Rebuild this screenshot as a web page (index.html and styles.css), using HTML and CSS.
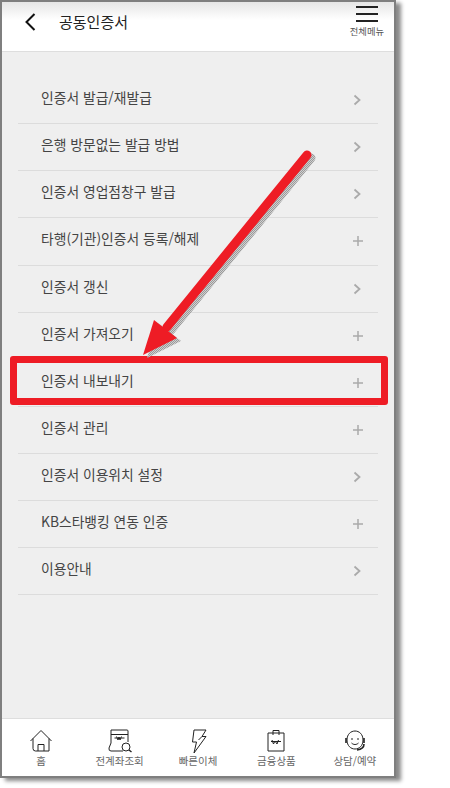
FILE: index.html
```html
<!DOCTYPE html>
<html lang="ko">
<head>
<meta charset="utf-8">
<title>공동인증서</title>
<link rel="stylesheet" href="styles.css">
</head>
<body>
<div class="phone">
  <header class="top">
    <svg class="back" width="14" height="20" viewBox="0 0 14 20"><path d="M10.500 2 2.500 10l8 8" fill="none" stroke="#111" stroke-width="2"/></svg>
    <h1 class="title">공동인증서</h1>
    <div class="menu">
      <svg width="22" height="16" viewBox="0 0 22 16"><path d="M0 1h22M0 8h22M0 15h22" stroke="#222" stroke-width="1.800"/></svg>
      <span>전체메뉴</span>
    </div>
  </header>
  <main class="content">
    <ul class="list">
      <li class="row"><span>인증서 발급/재발급</span><svg class="ic" width="10" height="14" viewBox="0 0 10 14"><path d="M1.500 2.500 6.500 7l-5 4.500" fill="none" stroke="#aaa" stroke-width="1.800"/></svg></li>
      <li class="row"><span>은행 방문없는 발급 방법</span><svg class="ic" width="10" height="14" viewBox="0 0 10 14"><path d="M1.500 2.500 6.500 7l-5 4.500" fill="none" stroke="#aaa" stroke-width="1.800"/></svg></li>
      <li class="row"><span>인증서 영업점창구 발급</span><svg class="ic" width="10" height="14" viewBox="0 0 10 14"><path d="M1.500 2.500 6.500 7l-5 4.500" fill="none" stroke="#aaa" stroke-width="1.800"/></svg></li>
      <li class="row"><span>타행(기관)인증서 등록/해제</span><svg class="ic" width="10" height="14" viewBox="0 0 10 14"><path d="M5 2v10M0 7h10" fill="none" stroke="#aaa" stroke-width="1.500"/></svg></li>
      <li class="row"><span>인증서 갱신</span><svg class="ic" width="10" height="14" viewBox="0 0 10 14"><path d="M1.500 2.500 6.500 7l-5 4.500" fill="none" stroke="#aaa" stroke-width="1.800"/></svg></li>
      <li class="row"><span>인증서 가져오기</span><svg class="ic" width="10" height="14" viewBox="0 0 10 14"><path d="M5 2v10M0 7h10" fill="none" stroke="#aaa" stroke-width="1.500"/></svg></li>
      <li class="row"><span>인증서 내보내기</span><svg class="ic" width="10" height="14" viewBox="0 0 10 14"><path d="M5 2v10M0 7h10" fill="none" stroke="#aaa" stroke-width="1.500"/></svg></li>
      <li class="row"><span>인증서 관리</span><svg class="ic" width="10" height="14" viewBox="0 0 10 14"><path d="M5 2v10M0 7h10" fill="none" stroke="#aaa" stroke-width="1.500"/></svg></li>
      <li class="row"><span>인증서 이용위치 설정</span><svg class="ic" width="10" height="14" viewBox="0 0 10 14"><path d="M1.500 2.500 6.500 7l-5 4.500" fill="none" stroke="#aaa" stroke-width="1.800"/></svg></li>
      <li class="row"><span>KB스타뱅킹 연동 인증</span><svg class="ic" width="10" height="14" viewBox="0 0 10 14"><path d="M5 2v10M0 7h10" fill="none" stroke="#aaa" stroke-width="1.500"/></svg></li>
      <li class="row"><span>이용안내</span><svg class="ic" width="10" height="14" viewBox="0 0 10 14"><path d="M1.500 2.500 6.500 7l-5 4.500" fill="none" stroke="#aaa" stroke-width="1.800"/></svg></li>
    </ul>
  </main>
  <nav class="tabs">
    <div class="tab">
      <svg width="26" height="26" viewBox="0 0 26 26" fill="none" stroke="#222" stroke-width="1"><path d="M2.500 13 13 2.500 23.500 13M5 10.500v10q0 2.500 2.500 2.500H21V10.500M10 23v-6.500h6V23"/></svg>
      <span>홈</span>
    </div>
    <div class="tab">
      <svg width="28" height="26" viewBox="0 0 28 26" fill="none" stroke="#222" stroke-width="1"><path d="M5 2h16q1 0 1 1v11M5 2v13l-2 5q-.500 3 2 3h12M5 6.500h17M10.500 8.500l1.500 3.500 1-3 1 3 1.500-3.500M8.500 10h10" /><circle cx="20" cy="19" r="4"/><path d="m23 22 2.500 2" stroke-width="1.500"/></svg>
      <span>전계좌조회</span>
    </div>
    <div class="tab">
      <svg width="26" height="26" viewBox="0 0 26 26" fill="none" stroke="#222" stroke-width="1"><path d="M9 2h12l-4 6.500h4L9 25l2.500-11H7.500zM17 8.500l-3.500 3.500"/></svg>
      <span>빠른이체</span>
    </div>
    <div class="tab">
      <svg width="26" height="26" viewBox="0 0 26 26" fill="none" stroke="#222" stroke-width="1"><path d="M5 5h16v18H5zM10 7V2.500h6V7"/><path d="M9 12l1.500 4 1.500-3 2 3 1.500-4M8 13.500h10"/></svg>
      <span>금융상품</span>
    </div>
    <div class="tab">
      <svg width="28" height="26" viewBox="0 0 28 26" fill="none" stroke="#222" stroke-width="1"><path d="M6 12c0-12 16-12 16 0 0 6-4 9-8 9s-8-3-8-9z"/><path d="M10 11h2M16 11h2M10.500 15c2 2 5 2 7 0"/><path d="M5 10v5M23 10v5M23 16q0 5-7 6" stroke-width="1.600"/></svg>
      <span>상담/예약</span>
    </div>
  </nav>
  <div class="highlight"></div>
  <svg class="arrow" width="190" height="215" viewBox="0 0 190 215">
    <defs>
      <pattern id="dither" width="2" height="2" patternUnits="userSpaceOnUse">
        <rect width="2" height="2" fill="#cfcfcf"/>
        <rect width="1" height="1" fill="#9a9a9a"/>
        <rect x="1" y="1" width="1" height="1" fill="#9a9a9a"/>
      </pattern>
    </defs>
    <g transform="translate(4 3)">
      <path d="M168 5 28 177" fill="none" stroke="url(#dither)" stroke-width="9" stroke-linecap="round"/>
      <path d="M4 205 15 170 38 188z" fill="url(#dither)"/>
    </g>
    <path d="M168 5 28 177" fill="none" stroke="#ee1c25" stroke-width="9" stroke-linecap="round"/>
    <path d="M4 205 15 170 38 188z" fill="#ee1c25"/>
  </svg>
</div>
</body>
</html>
```
FILE: styles.css
```css
* { box-sizing: border-box; }
html, body { margin: 0; padding: 0; background: #fff; }
body { width: 450px; height: 788px; overflow: hidden; font-family: "Noto Sans CJK KR", "Noto Sans", sans-serif; }
.phone {
  position: relative;
  width: 396px;
  height: 778px;
  border: 2px solid #7f7f7f;
  background: #efefef;
  display: flex;
  flex-direction: column;
  box-shadow: 5px 3px 4px #8a8a8a;
}
.top {
  height: 50px;
  flex: none;
  display: flex;
  align-items: flex-start;
  background: linear-gradient(#e6e6e6, #fff 18px);
  border-bottom: 1px solid #dedede;
  padding: 0 10px 0 22px;
}
.back { margin: 10px 21px 0 0; }
.title { margin: 8px 0 0; font-size: 15px; line-height: 24px; font-weight: 400; color: #222; flex: 1; }
.menu { display: flex; flex-direction: column; align-items: center; gap: 3px; padding-top: 4px; }
.menu span { font-size: 9.300px; color: #555; line-height: 13px; }
.content { flex: 1; padding: 25px 16px 0; }
.list { list-style: none; margin: 0; padding: 0; }
.row {
  height: 47.130px;
  display: flex;
  align-items: center;
  justify-content: space-between;
  padding: 0 15px 0 23px;
  border-bottom: 1px solid #dcdcdc;
  font-size: 13.800px;
  color: #444;
}
.row span { margin-bottom: 6px; }
.ic { flex: none; }
.tabs {
  height: 58px;
  flex: none;
  display: flex;
  justify-content: space-between;
  background: #fff;
  border-top: 1px solid #dedede;
  padding: 9px 0 0;
}
.tab { width: 79px; display: flex; flex-direction: column; align-items: center; }
.tab span { font-size: 10.500px; line-height: 14px; color: #666; }
.highlight {
  position: absolute;
  left: 8px;
  top: 354px;
  width: 378px;
  height: 49px;
  border: 7px solid #ee1c25;
  border-radius: 3px;
}
.arrow { position: absolute; left: 137px; top: 148px; }
```
